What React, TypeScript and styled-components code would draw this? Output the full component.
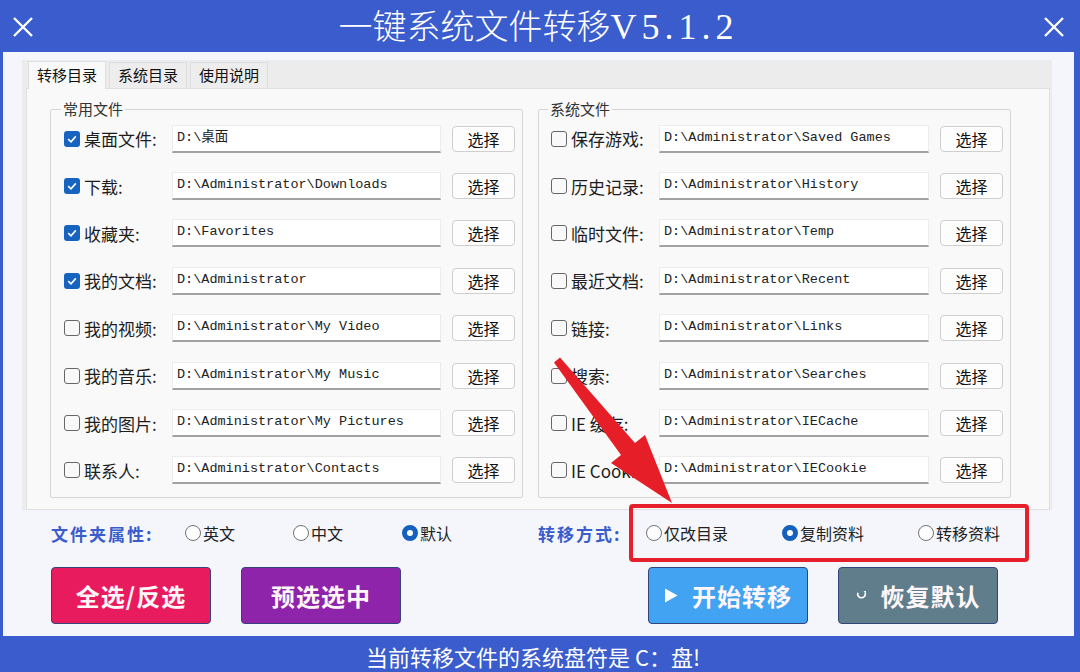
import React from "react";
import styled, { createGlobalStyle } from "styled-components";

// 全局样式
const GlobalStyle = createGlobalStyle`
  * { box-sizing: border-box; }
  html, body { margin: 0; padding: 0; }
  body {
    width: 1080px;
    height: 672px;
    overflow: hidden;
    font-family: "Noto Sans CJK SC", "Noto Sans", sans-serif;
  }
`;

// 窗口
const Window = styled.div`
  position: relative;
  width: 1080px;
  height: 672px;
  background: #3a5ccc;
  display: flex;
  flex-direction: column;
`;

// 标题栏
const TitleBar = styled.header`
  height: 52px;
  display: flex;
  align-items: center;
  padding: 2px 14px 0 11px;
`;

const Title = styled.h1`
  flex: 1;
  margin: 0;
  text-align: center;
  color: #ffffff;
  font-size: 34px;
  font-weight: 300;
  line-height: 1.2;

  span {
    font-family: "Liberation Serif", serif;
    font-size: 36px;
    letter-spacing: 5px;
  }
`;

const CloseIcon = styled.svg`
  width: 24px;
  height: 24px;
  flex: none;
`;

// 主体
const Body = styled.main`
  flex: 1;
  margin: 0 6px 0 3px;
  background: #f4f6fb;
  padding: 8px 22px 12px 19px;
  display: flex;
  flex-direction: column;
`;

// 选项卡
const TabFrame = styled.section`
  height: 450px;
  display: flex;
  flex-direction: column;
  background: #ececec;
`;

const TabStrip = styled.div`
  height: 28px;
  display: flex;
  align-items: flex-end;
  padding-left: 6px;
  gap: 3px;
`;

const Tab = styled.div<{ $active?: boolean }>`
  height: ${(p) => (p.$active ? 28 : 26)}px;
  padding: 0 8px;
  font-size: 15px;
  line-height: ${(p) => (p.$active ? 26 : 24)}px;
  color: #111;
  background: ${(p) => (p.$active ? "#f9f9f9" : "#ededed")};
  border: 1px solid #dedede;
  border-bottom: none;
  margin-bottom: ${(p) => (p.$active ? -1 : 0)}px;
  position: relative;
  z-index: ${(p) => (p.$active ? 1 : 0)};
`;

const TabContent = styled.div`
  flex: 1;
  margin: 0 2px 0 4px;
  background: #f9f9f9;
  border: 1px solid #e0e0e0;
  padding: 11px 0 0 23px;
  display: flex;
  gap: 15px;
`;

// 分组框
const Group = styled.fieldset<{ $pl: number }>`
  width: 473px;
  height: 398px;
  margin: 0;
  padding: 0 7px 0 ${(p) => p.$pl}px;
  min-width: 0;
  border: 1px solid #d6d6d6;
  border-radius: 2px;

  legend {
    margin-left: -3px;
    padding: 0 2px;
    font-size: 15px;
    line-height: 18px;
    color: #333;
  }
`;

const Rows = styled.div`
  margin-top: -3px;
`;

const Row = styled.div`
  height: 47.4px;
  display: grid;
  grid-template-columns: 97px 1fr 63px;
  column-gap: 11px;
  align-items: center;
`;

const CheckLabel = styled.label`
  display: flex;
  align-items: center;
  gap: 4px;
  font-size: 17px;
  color: #1d1d1d;
  white-space: nowrap;
`;

const Box = styled.span<{ $on?: boolean }>`
  width: 16px;
  height: 16px;
  flex: none;
  border-radius: 3px;
  border: ${(p) => (p.$on ? "none" : "1.5px solid #676767")};
  background: ${(p) => (p.$on ? "#1764c0" : "#f9f9f9")};
  display: flex;
  align-items: center;
  justify-content: center;
`;

const PathField = styled.div`
  height: 28px;
  background: #ffffff;
  border: 1px solid #ececec;
  border-bottom: 2px solid #a2a2a2;
  padding: 1px 4px 0;
  font-family: "Liberation Mono", "Noto Sans CJK SC", monospace;
  font-size: 13.5px;
  line-height: 21px;
  color: #222;
  white-space: nowrap;
  overflow: hidden;
`;

const PickButton = styled.button`
  height: 26px;
  padding: 0;
  border: 1px solid #cfcfcf;
  border-radius: 4px;
  background: #fdfdfd;
  font-family: "Noto Sans CJK SC", sans-serif;
  font-size: 16px;
  color: #111;
`;

// 选项行
const OptionRow = styled.div`
  height: 32px;
  margin-top: 7px;
  padding-left: 29px;
  display: grid;
  grid-template-columns: 487px 1fr;
  align-items: center;
`;

const OptionGroup = styled.div`
  display: flex;
  align-items: center;
`;

const OptionLabel = styled.span<{ $w: number }>`
  width: ${(p) => p.$w}px;
  flex: none;
  font-size: 17px;
  font-weight: 700;
  letter-spacing: 2px;
  color: #3a5ccc;
`;

const Highlight = styled.div`
  width: 400px;
  height: 58px;
  margin: -13px 0;
  border: 4px solid #e5202b;
  border-radius: 4px;
  padding-left: 13px;
  display: flex;
  align-items: center;
`;

const RadioItem = styled.label<{ $w: number }>`
  width: ${(p) => p.$w}px;
  flex: none;
  display: flex;
  align-items: center;
  gap: 2px;
  font-size: 16px;
  color: #222;
`;

const Dot = styled.span<{ $on?: boolean }>`
  width: 16px;
  height: 16px;
  flex: none;
  border-radius: 50%;
  background: #fff;
  border: ${(p) => (p.$on ? "5px solid #1560bd" : "1.5px solid #727272")};
`;

// 按钮行
const ButtonRow = styled.div`
  height: 57px;
  margin-top: 18px;
  padding-left: 29px;
  display: grid;
  grid-template-columns: 487px 1fr;
`;

const ButtonGroup = styled.div<{ $pl: number }>`
  display: flex;
  gap: 30px;
  padding-left: ${(p) => p.$pl}px;
`;

const ActionButton = styled.button<{ $bg: string }>`
  width: 160px;
  height: 57px;
  border: 1px solid #34437a;
  border-radius: 4px;
  background: ${(p) => p.$bg};
  color: #fff6f8;
  font-family: "Noto Sans CJK SC", sans-serif;
  font-size: 24px;
  font-weight: 700;
  letter-spacing: 1px;
  display: flex;
  align-items: center;
  justify-content: center;
  gap: 14px;
  padding: 0;
`;

// 状态栏
const StatusBar = styled.footer`
  height: 36px;
  padding: 4px 14px 0 0;
  text-align: center;
  color: #ffffff;
  font-size: 22px;
  line-height: 32px;
`;

// 红色箭头
const Arrow = styled.svg`
  position: absolute;
  left: 0;
  top: 0;
  width: 1080px;
  height: 672px;
  pointer-events: none;
`;

const leftRows = [
  { name: "桌面文件:", path: "D:\\桌面", on: true },
  { name: "下载:", path: "D:\\Administrator\\Downloads", on: true },
  { name: "收藏夹:", path: "D:\\Favorites", on: true },
  { name: "我的文档:", path: "D:\\Administrator", on: true },
  { name: "我的视频:", path: "D:\\Administrator\\My Video" },
  { name: "我的音乐:", path: "D:\\Administrator\\My Music" },
  { name: "我的图片:", path: "D:\\Administrator\\My Pictures" },
  { name: "联系人:", path: "D:\\Administrator\\Contacts" },
];

const rightRows = [
  { name: "保存游戏:", path: "D:\\Administrator\\Saved Games" },
  { name: "历史记录:", path: "D:\\Administrator\\History" },
  { name: "临时文件:", path: "D:\\Administrator\\Temp" },
  { name: "最近文档:", path: "D:\\Administrator\\Recent" },
  { name: "链接:", path: "D:\\Administrator\\Links" },
  { name: "搜索:", path: "D:\\Administrator\\Searches" },
  { name: "IE 缓存:", path: "D:\\Administrator\\IECache" },
  { name: "IE Cookie:", path: "D:\\Administrator\\IECookie" },
];

type RowData = { name: string; path: string; on?: boolean };

function Close() {
  return (
    <CloseIcon viewBox="0 0 24 24">
      <path d="M3 3 L21 21 M21 3 L3 21" stroke="#fff" strokeWidth="2.4" fill="none" />
    </CloseIcon>
  );
}

function FileRow({ row }: { row: RowData }) {
  return (
    <Row>
      <CheckLabel>
        <Box $on={row.on}>
          {row.on && (
            <svg width="12" height="12" viewBox="0 0 12 12">
              <path d="M2.2 6.2 L5 8.8 L9.8 3.4" stroke="#fff" strokeWidth="1.6" fill="none" />
            </svg>
          )}
        </Box>
        {row.name}
      </CheckLabel>
      <PathField>{row.path}</PathField>
      <PickButton>选择</PickButton>
    </Row>
  );
}

export default function App() {
  return (
    <>
      <GlobalStyle />
      <Window>
        <TitleBar>
          <Close />
          <Title>
            一键系统文件转移<span>V5.1.2</span>
          </Title>
          <Close />
        </TitleBar>

        <Body>
          <TabFrame>
            <TabStrip>
              <Tab $active>转移目录</Tab>
              <Tab>系统目录</Tab>
              <Tab>使用说明</Tab>
            </TabStrip>
            <TabContent>
              <Group $pl={13}>
                <legend>常用文件</legend>
                <Rows>
                  {leftRows.map((r) => (
                    <FileRow key={r.name} row={r} />
                  ))}
                </Rows>
              </Group>
              <Group $pl={12}>
                <legend>系统文件</legend>
                <Rows>
                  {rightRows.map((r) => (
                    <FileRow key={r.name} row={r} />
                  ))}
                </Rows>
              </Group>
            </TabContent>
          </TabFrame>

          <OptionRow>
            <OptionGroup>
              <OptionLabel $w={134}>文件夹属性:</OptionLabel>
              <RadioItem $w={108}><Dot />英文</RadioItem>
              <RadioItem $w={109}><Dot />中文</RadioItem>
              <RadioItem $w={108}><Dot $on />默认</RadioItem>
            </OptionGroup>
            <OptionGroup>
              <OptionLabel $w={91}>转移方式:</OptionLabel>
              <Highlight>
                <RadioItem $w={136}><Dot />仅改目录</RadioItem>
                <RadioItem $w={136}><Dot $on />复制资料</RadioItem>
                <RadioItem $w={96}><Dot />转移资料</RadioItem>
              </Highlight>
            </OptionGroup>
          </OptionRow>

          <ButtonRow>
            <ButtonGroup $pl={0}>
              <ActionButton $bg="#e91b5f">全选/反选</ActionButton>
              <ActionButton $bg="#8e24aa">预选选中</ActionButton>
            </ButtonGroup>
            <ButtonGroup $pl={110}>
              <ActionButton $bg="#42a3f3">
                <svg width="14" height="15" viewBox="0 0 14 15">
                  <path d="M1 0.5 L13.5 7.5 L1 14.5 Z" fill="#fff" />
                </svg>
                开始转移
              </ActionButton>
              <ActionButton $bg="#607d8b">
                <svg width="11" height="11" viewBox="0 0 12 12">
                  <path d="M2 3 A4.2 4.2 0 1 0 10 3" stroke="#fff" strokeWidth="1.8" fill="none" />
                  <path d="M8.2 1 L11 1.2 L10.6 4.2 Z" fill="#fff" />
                </svg>
                恢复默认
              </ActionButton>
            </ButtonGroup>
          </ButtonRow>
        </Body>

        <StatusBar>当前转移文件的系统盘符是 C：盘!</StatusBar>

        <Arrow viewBox="0 0 1080 672">
          <polygon
            points="554,362.5 560,357.5 635,443 645,435 672,503 611,463 621,455"
            fill="#e61e28"
            strokeLinejoin="round"
          />
        </Arrow>
      </Window>
    </>
  );
}
